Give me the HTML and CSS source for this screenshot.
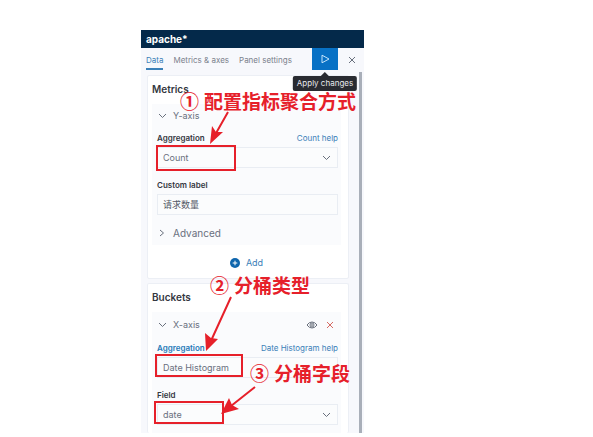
FILE: index.html
```html
<!DOCTYPE html>
<html lang="zh-CN">
<head>
<meta charset="utf-8">
<title>apache*</title>
<link rel="stylesheet" href="styles.css">
</head>
<body>
<main class="page">
  <section class="panel">
    <header class="panel-header"><h1>apache*</h1></header>
    <nav class="tabs">
      <a class="tab active" href="#data">Data</a>
      <a class="tab" href="#metrics">Metrics &amp; axes</a>
      <a class="tab" href="#settings">Panel settings</a>
      <button class="apply" type="button" aria-label="Apply changes">
        <svg width="9" height="10" viewBox="0 0 9 10"><path d="M1 1.2 8 5 1 8.8Z"/></svg>
        <span class="tooltip">Apply changes</span>
      </button>
      <button class="close" type="button" aria-label="Close">
        <svg width="8" height="8" viewBox="0 0 8 8"><path d="M1 1 7 7M7 1 1 7"/></svg>
      </button>
    </nav>
    <div class="content">
      <section class="card">
        <h2>Metrics</h2>
        <div class="group">
          <div class="group-head">
            <button class="toggle" type="button"><svg width="9" height="6" viewBox="0 0 9 6"><path d="M1 1 4.5 4.5 8 1"/></svg>Y-axis</button>
          </div>
          <div class="label-row"><label for="metric">Aggregation</label><a href="#count">Count help</a></div>
          <div class="select"><select id="metric"><option>Count</option></select><svg width="9" height="6" viewBox="0 0 9 6"><path d="M1 1 4.5 4.5 8 1"/></svg></div>
          <div class="label-row spaced"><label for="custom">Custom label</label></div>
          <input id="custom" type="text" value="请求数量">
          <button class="toggle advanced" type="button"><svg width="9" height="8" viewBox="0 0 9 8"><path d="M2 1 5.5 4 2 7"/></svg>Advanced</button>
        </div>
        <button class="add" type="button"><svg width="10" height="10" viewBox="0 0 10 10"><circle cx="5" cy="5" r="5"/><path d="M5 2.7V7.3M2.7 5H7.3"/></svg>Add</button>
      </section>
      <section class="card buckets">
        <h2>Buckets</h2>
        <div class="group">
          <div class="group-head">
            <button class="toggle" type="button"><svg width="9" height="6" viewBox="0 0 9 6"><path d="M1 1 4.5 4.5 8 1"/></svg>X-axis</button>
            <button class="icon" type="button" aria-label="Disable aggregation"><svg width="12" height="8" viewBox="0 0 12 8"><path d="M1 4Q3 1 6 1T11 4Q9 7 6 7T1 4Z"/><circle cx="6" cy="4" r="2"/><circle cx="6" cy="4" r=".5"/></svg></button>
            <button class="icon remove" type="button" aria-label="Remove"><svg width="8" height="8" viewBox="0 0 8 8"><path d="M1 1 7 7M7 1 1 7"/></svg></button>
          </div>
          <div class="label-row"><label class="focused" for="bucket">Aggregation</label><a href="#histogram">Date Histogram help</a></div>
          <div class="select"><select id="bucket"><option>Date Histogram</option></select></div>
          <div class="label-row spaced"><label for="field">Field</label></div>
          <div class="select"><select id="field"><option>date</option></select><svg width="9" height="6" viewBox="0 0 9 6"><path d="M1 1 4.5 4.5 8 1"/></svg></div>
        </div>
      </section>
    </div>
    <div class="notes">
      <svg class="marks" width="223" height="402" viewBox="0 0 223 402">
        <g class="frames">
          <rect x="16" y="116" width="78" height="24"/>
          <rect x="15" y="325" width="86" height="21"/>
          <rect x="14" y="372" width="68" height="21"/>
        </g>
        <g class="shafts"><path d="M87 82 74 105M90 267 69 313M114 357 90 376"/></g>
        <g class="heads"><path d="M69 114 71 96 75 102 82 102ZM65 321 64 303 70 308 77 309ZM80 384 88 368 91 375 98 379Z"/></g>
      </svg>
      <p class="note first"><span>①</span>配置指标聚合方式</p>
      <p class="note second"><span>②</span>分桶类型</p>
      <p class="note third"><span>③</span>分桶字段</p>
    </div>
  </section>
</main>
</body>
</html>
```
FILE: styles.css
```css
* { box-sizing: border-box; }
body {
  margin: 0;
  background: #fff;
  color: #343741;
  font: 9px/12px Inter, "Noto Sans CJK SC", sans-serif;
}
h1, h2, p { margin: 0; }
a { color: #3b80b8; text-decoration: none; }
button, input, select { font: inherit; color: inherit; }
button { display: flex; align-items: center; padding: 0; border: 0; background: none; }
svg { display: block; flex: none; fill: none; stroke: #69707d; stroke-width: 1; }

.page { padding: 30px 229px 5px 141px; }
.panel { position: relative; background: #f7f8fc; }
.panel-header { height: 18px; padding: 0 5px; background: #04294a; color: #fff; }
.panel-header h1 { font-size: 10px; line-height: 18px; font-weight: 700; }

.tabs { display: flex; align-items: center; height: 24px; padding-left: 5px; gap: 10px; }
.tab { color: #7b818c; font-size: 8px; line-height: 24px; white-space: nowrap; }
.tab.active { color: #3b80b8; box-shadow: inset 0 -2px #3b80b8; height: 22px; line-height: 24px; align-self: flex-start; }
.apply {
  position: relative;
  justify-content: center;
  align-self: flex-start;
  width: 26px;
  height: 22px;
  margin-left: auto;
  background: #0871c5;
}
.apply svg { stroke: #c5e5fc; }
.close { padding-right: 8px; }
.tooltip {
  position: absolute;
  z-index: 2;
  top: 28px;
  left: 50%;
  padding: 0 4px;
  border-radius: 2px;
  background: #292b31;
  color: #e8e9ec;
  font-size: 8px;
  line-height: 15px;
  white-space: nowrap;
  transform: translateX(-50%);
}
.tooltip::before {
  content: "";
  position: absolute;
  top: -4px;
  left: 50%;
  margin-left: -4px;
  border: solid transparent;
  border-width: 0 4px 4px;
  border-bottom-color: #292b31;
}

.content { display: grid; gap: 4px; margin-right: 2px; padding: 3px 10px 0 6px; border-right: 3px solid #a9afb9; }
.card { padding: 5px 7px 9px 4px; border: 1px solid #eceff5; border-radius: 2px; background: #fff; }
.card h2 { font-size: 10px; line-height: 16px; font-weight: 600; }
.group { margin-top: 7px; padding: 3px 3px 4px 5px; background: #fafbfd; }
.group-head { display: flex; align-items: center; gap: 8px; height: 17px; padding-right: 4px; }
.toggle { gap: 6px; margin-right: auto; padding-left: 1px; color: #69707d; }
.label-row { display: flex; justify-content: space-between; margin-top: 8px; font-size: 8px; line-height: 12px; white-space: nowrap; }
.label-row label { font-weight: 600; }
.label-row .focused { color: #2679b8; }
.label-row.spaced { margin-top: 11px; }
.select { position: relative; margin-top: 3px; }
.select svg { position: absolute; right: 7px; top: 8px; pointer-events: none; }
select, input {
  display: block;
  width: 100%;
  height: 21px;
  padding: 0 5px;
  border: 1px solid #e9edf3;
  border-radius: 0;
  background: #fbfcfd;
  color: #69707d;
  appearance: none;
}
input { margin-top: 3px; color: #535966; }
.advanced { margin-top: 10px; font-size: 10px; line-height: 16px; }
.add { gap: 6px; margin: 12px auto 0; color: #3b80b8; }
.add svg { fill: #0f66ad; stroke: none; }
.add path { stroke: #fff; }
.icon svg { stroke: #69707d; }
.remove svg { stroke: #d66a62; }
.buckets { padding-bottom: 0; border-bottom: 0; }
.buckets .group-head { height: 19px; }
.buckets .group { padding-bottom: 8px; }

.notes { position: absolute; inset: 0; pointer-events: none; }
.marks { position: absolute; left: 0; top: 0; }
.frames { stroke: #e6202a; stroke-width: 2; }
.shafts { stroke: #e6202a; stroke-width: 2; }
.heads { fill: #e6202a; stroke: none; }
.note {
  position: absolute;
  display: flex;
  gap: 5px;
  color: #e6202a;
  font: 700 19px/24px "Noto Sans CJK SC", sans-serif;
  white-space: nowrap;
}
.first { left: 39px; top: 59px; }
.second { left: 69px; top: 243px; }
.third { left: 109px; top: 331px; }
```
